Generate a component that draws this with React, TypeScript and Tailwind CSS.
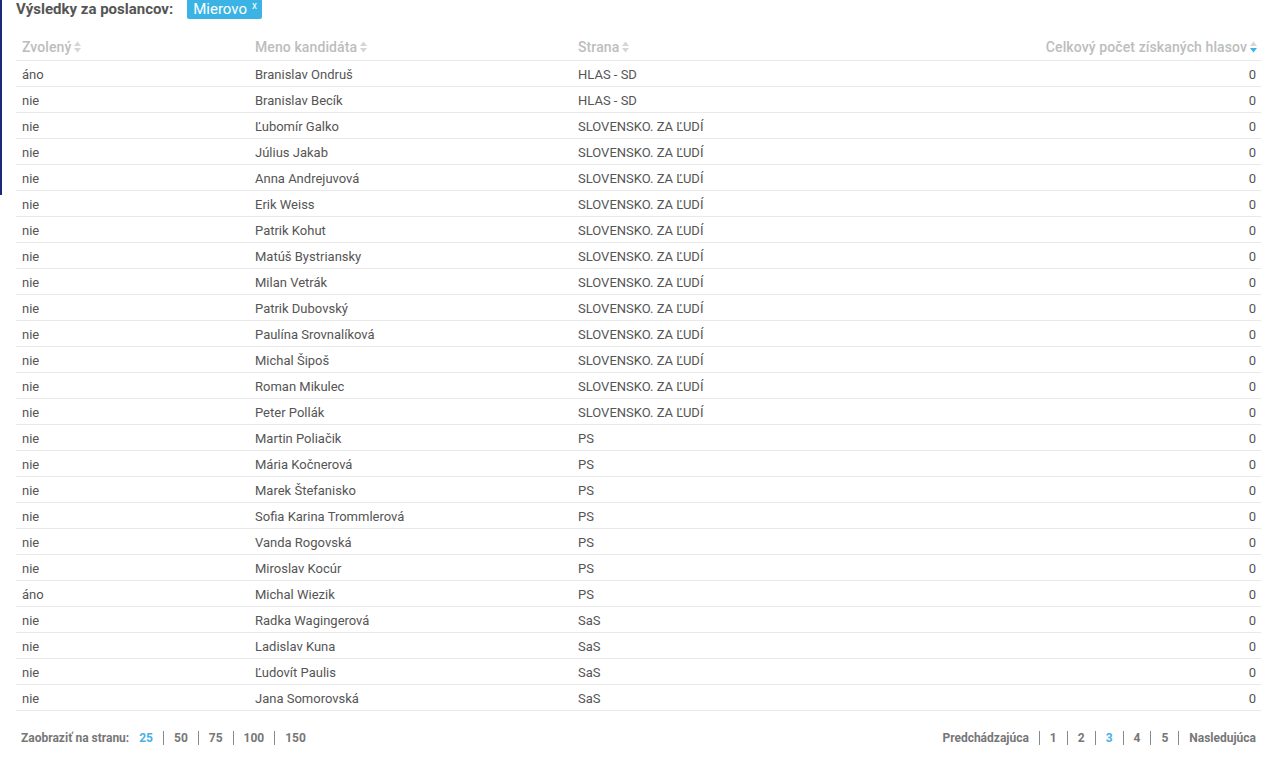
import React from "react";

type Row = { zvoleny: string; meno: string; strana: string; hlasy: number };

const rows: Row[] = [
  { zvoleny: "áno", meno: "Branislav Ondruš", strana: "HLAS - SD", hlasy: 0 },
  { zvoleny: "nie", meno: "Branislav Becík", strana: "HLAS - SD", hlasy: 0 },
  { zvoleny: "nie", meno: "Ľubomír Galko", strana: "SLOVENSKO. ZA ĽUDÍ", hlasy: 0 },
  { zvoleny: "nie", meno: "Július Jakab", strana: "SLOVENSKO. ZA ĽUDÍ", hlasy: 0 },
  { zvoleny: "nie", meno: "Anna Andrejuvová", strana: "SLOVENSKO. ZA ĽUDÍ", hlasy: 0 },
  { zvoleny: "nie", meno: "Erik Weiss", strana: "SLOVENSKO. ZA ĽUDÍ", hlasy: 0 },
  { zvoleny: "nie", meno: "Patrik Kohut", strana: "SLOVENSKO. ZA ĽUDÍ", hlasy: 0 },
  { zvoleny: "nie", meno: "Matúš Bystriansky", strana: "SLOVENSKO. ZA ĽUDÍ", hlasy: 0 },
  { zvoleny: "nie", meno: "Milan Vetrák", strana: "SLOVENSKO. ZA ĽUDÍ", hlasy: 0 },
  { zvoleny: "nie", meno: "Patrik Dubovský", strana: "SLOVENSKO. ZA ĽUDÍ", hlasy: 0 },
  { zvoleny: "nie", meno: "Paulína Srovnalíková", strana: "SLOVENSKO. ZA ĽUDÍ", hlasy: 0 },
  { zvoleny: "nie", meno: "Michal Šipoš", strana: "SLOVENSKO. ZA ĽUDÍ", hlasy: 0 },
  { zvoleny: "nie", meno: "Roman Mikulec", strana: "SLOVENSKO. ZA ĽUDÍ", hlasy: 0 },
  { zvoleny: "nie", meno: "Peter Pollák", strana: "SLOVENSKO. ZA ĽUDÍ", hlasy: 0 },
  { zvoleny: "nie", meno: "Martin Poliačik", strana: "PS", hlasy: 0 },
  { zvoleny: "nie", meno: "Mária Kočnerová", strana: "PS", hlasy: 0 },
  { zvoleny: "nie", meno: "Marek Štefanisko", strana: "PS", hlasy: 0 },
  { zvoleny: "nie", meno: "Sofia Karina Trommlerová", strana: "PS", hlasy: 0 },
  { zvoleny: "nie", meno: "Vanda Rogovská", strana: "PS", hlasy: 0 },
  { zvoleny: "nie", meno: "Miroslav Kocúr", strana: "PS", hlasy: 0 },
  { zvoleny: "áno", meno: "Michal Wiezik", strana: "PS", hlasy: 0 },
  { zvoleny: "nie", meno: "Radka Wagingerová", strana: "SaS", hlasy: 0 },
  { zvoleny: "nie", meno: "Ladislav Kuna", strana: "SaS", hlasy: 0 },
  { zvoleny: "nie", meno: "Ľudovít Paulis", strana: "SaS", hlasy: 0 },
  { zvoleny: "nie", meno: "Jana Somorovská", strana: "SaS", hlasy: 0 },
];

function SortIcon({ active = false }: { active?: boolean }) {
  return (
    <svg width="7" height="12" viewBox="0 0 7 12" className="ml-[3px] inline-block align-[-1px]">
      <polygon points="3.5,0.5 7,5 0,5" fill="#d6d6d6" />
      <polygon points="0,7 7,7 3.5,11.5" fill={active ? "#3bb4e5" : "#d6d6d6"} />
    </svg>
  );
}

const perPage = ["25", "50", "75", "100", "150"];
const pages = ["Predchádzajúca", "1", "2", "3", "4", "5", "Nasledujúca"];

export default function App() {
  return (
    <div className="relative min-h-[762px] bg-white text-[13px] text-[#555] font-['Roboto','Liberation_Sans',sans-serif]">
      {/* left edge strip */}
      <div className="absolute left-0 top-0 h-[195px] w-[2px] bg-[#1b2a78]" />

      <div className="flex items-center gap-[14px] pl-4 h-[19px]">
        <h2 className="text-[15px] font-bold text-[#555] leading-none">Výsledky za poslancov:</h2>
        <span className="flex items-start bg-[#3bb4e5] text-white text-[15px] leading-[19px] pl-[6px] pr-[5px] rounded-b-[2px]">
          Mierovo
          <span className="text-[10px] leading-none ml-[5px] mt-[1px]">x</span>
        </span>
      </div>

      <div className="ml-4 mt-4 w-[1245px]">
        <table className="w-full border-collapse table-fixed">
          <colgroup>
            <col className="w-[233px]" />
            <col className="w-[323px]" />
            <col className="w-[300px]" />
            <col />
          </colgroup>
          <thead>
            <tr className="h-[25px] border-b border-[#e9e9e9] text-[14px] text-[#bdbdbd] tracking-[0.1px]">
              <th className="text-left font-medium px-[6px]">Zvolený<SortIcon /></th>
              <th className="text-left font-medium px-[6px]">Meno kandidáta<SortIcon /></th>
              <th className="text-left font-medium px-[6px]">Strana<SortIcon /></th>
              <th className="text-right font-medium pl-[6px] pr-[4px]">Celkový počet získaných hlasov<SortIcon active /></th>
            </tr>
          </thead>
          <tbody>
            {rows.map((r, i) => (
              <tr key={i} className="h-[26px] border-b border-[#e9e9e9]">
                <td className="px-[6px] pt-[4px]">{r.zvoleny}</td>
                <td className="px-[6px] pt-[4px]">{r.meno}</td>
                <td className="px-[6px] pt-[4px]">{r.strana}</td>
                <td className="text-right pl-[6px] pr-[5px] pt-[4px]">{r.hlasy}</td>
              </tr>
            ))}
          </tbody>
        </table>

        <div className="flex items-center justify-between mt-[18px] pl-[5px] pr-[5px] text-[12px] font-bold text-[#777]">
          <div className="flex items-center">
            <span className="mr-[10px]">Zaobraziť na stranu:</span>
            {perPage.map((p, i) => (
              <span key={p} className="flex items-center">
                {i > 0 && <span className="mx-[10px] h-[14px] w-px bg-[#888]" />}
                <span className={i === 0 ? "text-[#4ab0e5]" : ""}>{p}</span>
              </span>
            ))}
          </div>
          <div className="flex items-center">
            {pages.map((p, i) => (
              <span key={p} className="flex items-center">
                {i > 0 && <span className="mx-[10px] h-[14px] w-px bg-[#888]" />}
                <span className={p === "3" ? "text-[#4ab0e5]" : ""}>{p}</span>
              </span>
            ))}
          </div>
        </div>
      </div>
    </div>
  );
}
